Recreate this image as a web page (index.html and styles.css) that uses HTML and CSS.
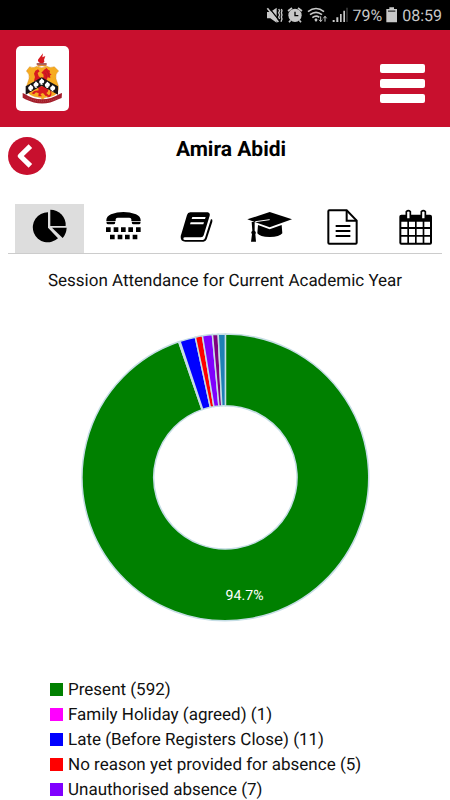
FILE: index.html
```html
<!DOCTYPE html>
<html lang="en">
<head>
<meta charset="UTF-8">
<meta name="viewport" content="width=device-width, initial-scale=1">
<title>Session Attendance</title>
<link rel="stylesheet" href="styles.css">
</head>
<body>

<!-- Phone status bar -->
<div class="status">
  <svg width="17" height="18" viewBox="17 18 51 54" fill="none" stroke="#c8c8c8" stroke-width="4">
    <path d="M20 36h10l19-13v45L30 55H20z" fill="#c8c8c8" stroke="none"/>
    <path d="M25 22l33 41" stroke="#000" stroke-width="4"/>
    <path d="M21 25l33 41" stroke-width="5"/>
    <path d="M55 27l3 5-3 6 3 7-3 6 3 6M63 27l2 5-2 6 2 7-2 6 2 6-3 8"/>
  </svg>
  <svg width="16" height="18" viewBox="81 18 48 54">
    <circle cx="105" cy="46" r="20" fill="#c8c8c8"/>
    <path d="M84 33l12-9M126 33l-12-9M92 61l-5 6M118 61l5 6" stroke="#c8c8c8" stroke-width="5" fill="none"/>
    <path d="M105 35v12h10" stroke="#000" stroke-width="4" fill="none"/>
  </svg>
  <svg width="21" height="18" viewBox="144 18 63 54" fill="none" stroke="#c8c8c8" stroke-width="5">
    <path d="M147 35q24-19 48 0M153 44q18-14 36 0M160 53q11-9 21-1"/>
    <path d="M166 59l5-5 5 5-5 7z" fill="#c8c8c8" stroke="none"/>
    <path d="M185 49v15m-5-5l5 6 5-6M198 65V49m-5 6l5-6 5 6" stroke-width="3"/>
  </svg>
  <svg width="16" height="18" viewBox="211 18 48 54">
    <path d="M213 60h6v6h-6zM224 52h6v14h-6zM235 42h5v24h-5zM245 32h5v34h-5z" fill="#c8c8c8"/>
    <path d="M254 23h4v43h-4z" fill="#444"/>
  </svg>
  <span>79%</span>
  <svg width="12" height="18" viewBox="378 18 36 54">
    <path d="M388 22h14v5h9v40h-32V27h9z" fill="#c8c8c8"/>
    <path d="M384 31h22v5h-22z" fill="#555"/>
  </svg>
  <span>08:59</span>
</div>

<header class="header">
  <a href="#" class="crest" aria-label="Home">
    <svg viewBox="0 0 159 195">
      <path d="M75 52c-8-3-12-9-7-14l13-16-2 12 9-4-4 12c3 5 0 8-4 10z" fill="#d71920"/>
      <path d="M62 52h30v4H62z" fill="#8f2f2a"/>
      <path d="M63 57h30l-5 5-10-2-11 2z" fill="#e08a2a"/>
      <path d="M41 62q12 6 21-1 5 4 15 4t16-4q8 6 22 1l13 13q-11 9-8 23l7 21q3 19-11 28-14 7-25 7-6 0-11 7-5-7-12-7-14-1-25-8-14-10-11-27l7-21q3-13-8-23z" fill="#f6ab20" stroke="#c77c18" stroke-width="1"/>
      <path d="M58 74l8-4 5 6-6 5 3 10 8 6 7-4-1-8-6-5 10-10 6-4 4 5 6 3-1 7 6 6-5 1 1 8-8-2-5 14-13 7-14-2-9-9 3-11-3-10z" fill="#d71920"/>
      <path d="M86 80q7 6 5 17M92 74q8 9 7 19" fill="none" stroke="#a51c25" stroke-width="2"/>
      <path d="M65 121h21l10 9q3 7-5 11l9 8-11 1-8-9-8 3 5 7H67l1-9-8-3-6 6-7-3 8-7 13-2z" fill="#d71920"/>
      <path d="M94 149q12 0 8-16l4 3q3 19-12 18z" fill="#d71920"/>
      <path d="M29 121l48-27 49 27v25l-49-27-48 27z" fill="#171315"/>
      <g fill="#fff">
        <path id="leaf" d="M39 132q-6-9 2-12 2-7 7 0 7 3 1 11h-4l3 4h-8l2-4z"/>
        <use href="#leaf" x="16" y="-10"/>
        <use href="#leaf" x="33" y="-19"/>
        <use href="#leaf" x="50" y="-9"/>
        <use href="#leaf" x="66" y="1"/>
      </g>
      <path d="M20 141l5 2q52 34 107 0l6-2-1 15-10 4q-48 25-99 0l-8-5z" fill="#a31f2c"/>
      <path d="M34 157q45 17 90 0" fill="none" stroke="#c65a5c" stroke-width="2" stroke-dasharray="3 3"/>
    </svg>
  </a>
  <button type="button" class="menu" aria-label="Menu">
    <i></i><i></i><i></i>
  </button>
</header>

<main>
  <div class="student">
    <a href="#" class="back" aria-label="Back">
      <svg viewBox="0 0 112 112"><path d="M66 27L36 56l30 29" fill="none" stroke="#fff" stroke-width="15" stroke-linejoin="round"/></svg>
    </a>
    <h1>Amira Abidi</h1>
  </div>

  <nav class="tabs">
    <div class="tab-list">
      <a href="#" class="tab active" aria-label="Attendance">
        <svg viewBox="76 28 144 144">
          <path d="M142 53v46l30 32a45 45 0 1 1-30-78z"/>
          <path d="M149 45a46 46 0 0 1 46 49h-46z"/>
          <path d="M154 99h44q-1 18-12 31z"/>
        </svg>
      </a>
      <a href="#" class="tab" aria-label="Contacts">
        <svg viewBox="295 28 144 144">
          <path d="M317 77q0-12 14-18 37-14 75 0 14 6 14 18v2h-28v-5q0-5-6-5h-35q-6 0-6 5v5h-28z"/>
          <path d="M317 81h27q0 8-6 8h-15q-6 0-6-8zM393 81h27q0 8-6 8h-15q-6 0-6-8z"/>
          <path d="M316 98h14v14h-14zM339 98h14v14h-14zM361 98h14v14h-14zM383 98h14v14h-14zM406 98h14v14h-14zM328 120h14v14h-14zM351 120h14v14h-14zM373 120h14v14h-14zM396 120h14v14h-14z"/>
        </svg>
      </a>
      <a href="#" class="tab" aria-label="Homework">
        <svg viewBox="64 28 144 144">
          <path d="M119 53h52q8 2 6 10l-18 59q-2 6-8 6h-48q-5 0-5 4t5 4h53q5 0 7-6l18-57q6 1 4 8l-17 53q-3 7-10 7h-54q-14 0-14-14 0-5 2-9l17-57q2-8 10-8z"/>
          <path d="M125 67h40l-2 6h-40zM120 83h40l-2 6h-40z" fill="#fff"/>
        </svg>
      </a>
      <a href="#" class="tab" aria-label="Achievement">
        <svg viewBox="283 28 144 144">
          <path d="M357 52l67 22-67 24-67-24z"/>
          <path d="M322 91l35 13 36-13 2 25q-8 11-38 11t-37-11z"/>
          <path d="M357 75l-42 6q-7 3-7 10v20" fill="none" stroke="#fff" stroke-width="3"/>
          <path d="M303 82h9v26q6 5 2 10l2 23h-15l3-23q-5-5 1-10z"/>
        </svg>
      </a>
      <a href="#" class="tab" aria-label="Documents">
        <svg viewBox="52 28 144 144" fill="none" stroke="#000" stroke-width="6">
          <path d="M86 47h52l30 31v66q0 3-3 3H86q-3 0-3-3V50q0-3 3-3z"/>
          <path d="M138 47v31h30M105 94h44M105 109h44M105 124h44"/>
        </svg>
      </a>
      <a href="#" class="tab" aria-label="Calendar">
        <svg viewBox="271 28 144 144">
          <path d="M302 60h86q6 0 6 6v78q0 6-6 6h-86q-6 0-6-6V66q0-6 6-6z"/>
          <path d="M302 81h18v16h-18zM325 81h18v16h-18zM348 81h18v16h-18zM371 81h17v16h-17zM302 103h18v18h-18zM325 103h18v18h-18zM348 103h18v18h-18zM371 103h17v18h-17zM302 126h18v18h-18zM325 126h18v18h-18zM348 126h18v18h-18zM371 126h17v18h-17z" fill="#fff"/>
          <path d="M317 73V51q6-6 12 0v22zM362 73V51q6-6 12 0v22z" fill="#fff" stroke="#000" stroke-width="5"/>
        </svg>
      </a>
    </div>
  </nav>

  <h2>Session Attendance for Current Academic Year</h2>

  <svg id="chart" class="chart" viewBox="-144 -144 288 288" role="img" aria-label="Session attendance"></svg>

  <ul class="legend">
    <li><i class="swatch present"></i>Present (592)</li>
    <li><i class="swatch holiday"></i>Family Holiday (agreed) (1)</li>
    <li><i class="swatch late"></i>Late (Before Registers Close) (11)</li>
    <li><i class="swatch no-reason"></i>No reason yet provided for absence (5)</li>
    <li><i class="swatch unauthorised"></i>Unauthorised absence (7)</li>
  </ul>
</main>

<script>
const sessions = [
  { count: 592, color: '#008000' },
  { count: 1, color: '#ff00ff' },
  { count: 11, color: '#0000ff' },
  { count: 5, color: '#ff0000' },
  { count: 7, color: '#8000ff' },
  { count: 4, color: '#800080' },
  { count: 5, color: '#1e80b4' }
];
const chart = document.getElementById('chart');
const svgNS = 'http://www.w3.org/2000/svg';
const total = sessions.reduce((sum, s) => sum + s.count, 0);
const outer = 142;
const inner = 71;
let done = 0;

function point(radius, value) {
  const angle = value / total * Math.PI * 2;
  return (radius * Math.sin(angle)) + ' ' + (-radius * Math.cos(angle));
}

sessions.forEach(s => {
  const end = done + s.count;
  const large = s.count > total / 2 ? 1 : 0;
  const slice = document.createElementNS(svgNS, 'path');
  slice.setAttribute('d',
    `M${point(outer, done)} A${outer} ${outer} 0 ${large} 1 ${point(outer, end)} ` +
    `L${point(inner, end)} A${inner} ${inner} 0 ${large} 0 ${point(inner, done)}Z`);
  slice.setAttribute('fill', s.color);
  slice.setAttribute('class', 'slice');
  chart.appendChild(slice);
  done = end;
});

// percentage of the largest slice
const label = document.createElementNS(svgNS, 'text');
label.setAttribute('x', 19);
label.setAttribute('y', 121);
label.textContent = (sessions[0].count / total * 100).toFixed(1) + '%';
chart.appendChild(label);
</script>

</body>
</html>
```
FILE: styles.css
```css
* { box-sizing: border-box; }
body {
  margin: 0;
  background: #fff;
  color: #111;
  font-family: Roboto, Arial, sans-serif;
  text-rendering: geometricPrecision;
}
h1, h2, ul { margin: 0; padding: 0; font-weight: normal; }
svg { display: block; }
.status {
  display: flex;
  align-items: center;
  justify-content: flex-end;
  gap: 4px;
  height: 30px;
  padding-right: 8px;
  background: #000;
  color: #c8c8c8;
  font-size: 16px;
}
.header {
  display: flex;
  align-items: center;
  justify-content: space-between;
  padding: 16px 25px 16px 16px;
  background: #c8102e;
}
.crest {
  width: 53px;
  height: 65px;
  background: #fff;
  border-radius: 5px;
  overflow: hidden;
}
.menu {
  display: flex;
  flex-direction: column;
  gap: 6px;
  width: 45px;
  margin-top: 10px;
  padding: 0;
  border: none;
  background: none;
  cursor: pointer;
}
.menu i { width: 100%; height: 9px; background: #fff; border-radius: 2px; }
main { padding: 10px 8px 0; }
.student {
  display: grid;
  grid-template-columns: 38px 1fr 26px;
  align-items: start;
  height: 67px;
}
.back { width: 38px; height: 38px; background: #c8102e; border-radius: 50%; }
.student h1 {
  font-size: 21px;
  line-height: 26px;
  font-weight: bold;
  text-align: center;
  color: #000;
}
.tabs { border-bottom: 1px solid #ccc; }
.tab-list {
  display: grid;
  grid-template-columns: repeat(6, 1fr);
  gap: 4px;
  margin: 0 -7px 0 7px;
}
.tab { display: flex; justify-content: center; height: 49px; }
.tab svg { width: 48px; height: 48px; }
.tab.active { background: #ddd; }
h2 {
  margin-top: 15px;
  font-size: 17px;
  line-height: 24px;
  text-align: center;
}
.chart { width: 67%; margin: 39px auto 0; }
.slice { stroke: #c5dde5; stroke-width: 1.5; }
.chart text { fill: #fff; font-size: 14px; text-anchor: middle; }
.legend { margin: 57px 42px 0; list-style: none; }
.legend li {
  display: flex;
  align-items: center;
  gap: 5px;
  margin-bottom: 5px;
  font-size: 17px;
  line-height: 20px;
}
.legend li:last-child { margin-bottom: 0; }
.swatch { width: 13px; height: 13px; }
.present { background: #008000; }
.holiday { background: #ff00ff; }
.late { background: #0000ff; }
.no-reason { background: #ff0000; }
.unauthorised { background: #8000ff; }
```
